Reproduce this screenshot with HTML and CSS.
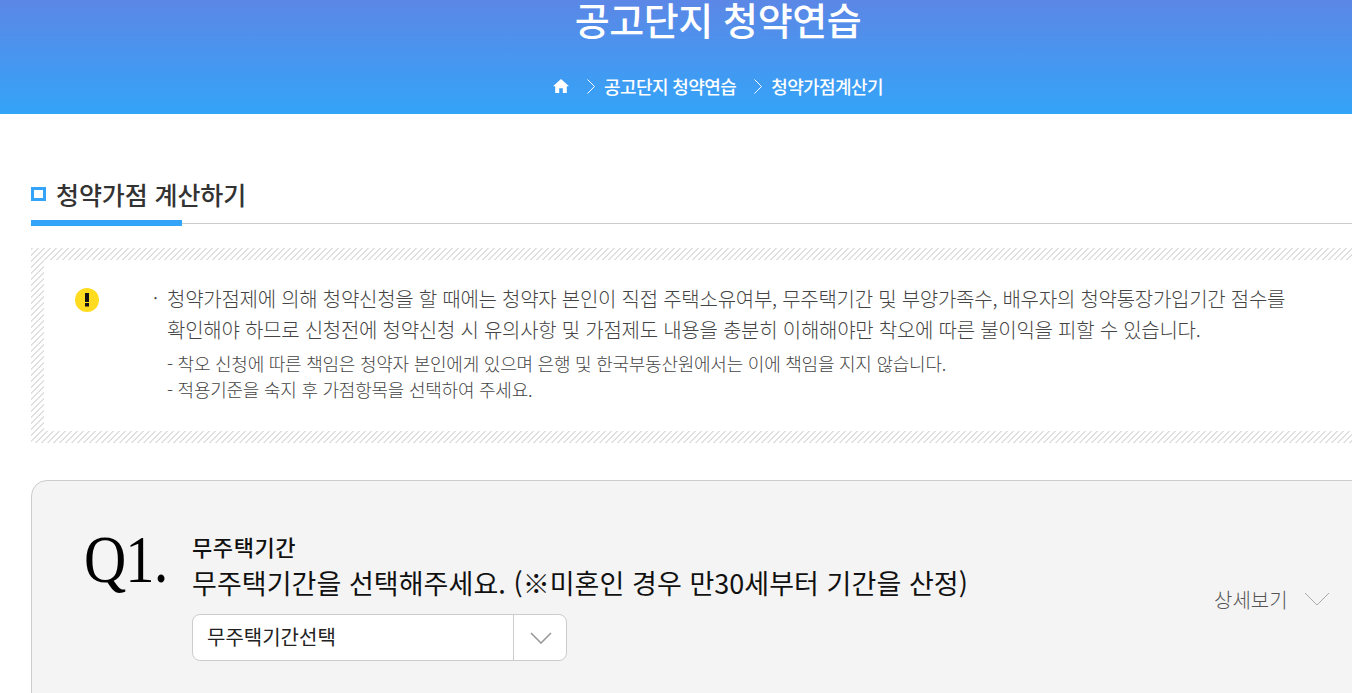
FILE: index.html
```html
<!DOCTYPE html>
<html lang="ko">
<head>
<meta charset="utf-8">
<title>청약가점계산기</title>
<link rel="stylesheet" href="styles.css">
</head>
<body>
<div class="page">
  <header class="hero">
    <h1 class="hero-title">공고단지 청약연습</h1>
    <nav class="crumbs">
      <svg class="home" viewBox="0 0 16 14" width="16" height="14"><path d="M8 0 L16 7.2 H13.8 V14 H9.8 V9.2 H6.2 V14 H2.2 V7.2 H0 Z" fill="#fff"/></svg>
      <svg class="chev" viewBox="0 0 8 15" width="8" height="15"><path d="M.5 .5 L7.5 7.5 L.5 14.5" fill="none" stroke="#fff" stroke-width="1"/></svg>
      <span class="crumb">공고단지 청약연습</span>
      <svg class="chev" viewBox="0 0 8 15" width="8" height="15"><path d="M.5 .5 L7.5 7.5 L.5 14.5" fill="none" stroke="#fff" stroke-width="1"/></svg>
      <span class="crumb">청약가점계산기</span>
    </nav>
  </header>
  <main class="main">
    <div class="sec-head">
      <span class="sec-mark"></span>
      <h2 class="sec-title">청약가점 계산하기</h2>
    </div>
    <section class="notice">
      <div class="notice-inner">
        <svg class="warn" viewBox="0 0 24 24" width="24" height="24"><circle cx="12" cy="12" r="12" fill="#ffdc1f"/><rect x="10" y="5" width="4" height="9" fill="#111"/><rect x="10" y="15" width="4" height="3.5" fill="#111"/></svg>
        <div class="notice-body">
          <p class="lead">청약가점제에 의해 청약신청을 할 때에는 청약자 본인이 직접 주택소유여부, 무주택기간 및 부양가족수, 배우자의 청약통장가입기간 점수를<br>확인해야 하므로 신청전에 청약신청 시 유의사항 및 가점제도 내용을 충분히 이해해야만 착오에 따른 불이익을 피할 수 있습니다.</p>
          <p class="sub">- 착오 신청에 따른 책임은 청약자 본인에게 있으며 은행 및 한국부동산원에서는 이에 책임을 지지 않습니다.</p>
          <p class="sub">- 적용기준을 숙지 후 가점항목을 선택하여 주세요.</p>
        </div>
      </div>
    </section>
    <section class="card">
      <div class="q-num">Q1.</div>
      <div class="q-body">
        <div class="q-label">무주택기간</div>
        <div class="q-text">무주택기간을 선택해주세요. (※미혼인 경우 만30세부터 기간을 산정)</div>
        <div class="select">
          <span class="select-val">무주택기간선택</span>
          <span class="select-btn"><svg viewBox="0 0 22 12" width="22" height="12"><path d="M1 1 L11 11 L21 1" fill="none" stroke="#999" stroke-width="1.6"/></svg></span>
        </div>
      </div>
      <div class="more">
        <span>상세보기</span>
        <svg viewBox="0 0 26 14" width="26" height="14"><path d="M1 1 L13 13 L25 1" fill="none" stroke="#aaa" stroke-width="1"/></svg>
      </div>
    </section>
  </main>
</div>
</body>
</html>
```
FILE: styles.css
```css
* { box-sizing: border-box; }
html, body { margin: 0; padding: 0; height: 693px; overflow: hidden; background: #fff; }
body { font-family: "Noto Sans CJK KR", "Noto Sans", sans-serif; color: #333; }
.page { width: 1436px; }
.hero { height: 114px; background: linear-gradient(180deg, #5c87e6 0%, #33a4f8 100%); color: #fff; text-align: center; overflow: hidden; }
.hero-title { margin: 0; height: 72px; font-size: 38px; font-weight: 500; line-height: 38px; letter-spacing: -0.4px; }
.crumbs { display: flex; justify-content: center; align-items: center; height: 28px; }
.home { margin-right: 18px; }
.chev { margin-right: 9px; }
.crumb { font-size: 18px; font-weight: 500; margin-right: 18px; letter-spacing: -0.6px; }
.crumb:last-child { margin-right: 0; }
.main { padding-left: 31px; }
.sec-head { position: relative; display: flex; align-items: center; height: 46px; margin-top: 64px; margin-bottom: 24px; padding-bottom: 13px; border-bottom: 1px solid #ccc; }
.sec-head::after { content: ""; position: absolute; left: 0; bottom: -3px; width: 151px; height: 6px; background: #33a4f8; }
.sec-mark { width: 15px; height: 14px; border: 3px solid #33a4f8; margin-right: 10px; }
.sec-title { margin: 0; font-size: 25px; font-weight: 500; color: #333; letter-spacing: -0.1px; }
.notice { padding: 12px 0 12px 13px; background: repeating-linear-gradient(135deg, #e0e0e0 0, #e0e0e0 2px, #fff 2px, #fff 4.243px); }
.notice-inner { display: flex; align-items: flex-start; background: #fff; height: 171px; padding: 23px 0 0 31px; }
.warn { flex: none; margin-top: 5px; }
.notice-body { margin-left: 68px; width: 1160px; }
.lead { position: relative; margin: 0 0 5px; font-size: 20px; font-weight: 300; line-height: 31px; color: #444; letter-spacing: -0.26px; }
.lead::before { content: "·"; position: absolute; left: -14px; top: -1px; }
.sub { margin: 0; font-size: 18px; font-weight: 300; line-height: 26px; color: #444; letter-spacing: -0.24px; }
.card { display: flex; height: 300px; margin-top: 37px; padding: 41px 0 0 52px; background: #f4f4f4; border: 1px solid #ccc; border-radius: 16px; }
.q-num { width: 108px; font-family: "Liberation Serif", serif; font-size: 68px; line-height: 74px; letter-spacing: -1px; color: #000; transform: scaleX(0.86); transform-origin: left center; }
.q-body { width: 1022px; }
.q-label { margin-top: 10px; font-size: 22px; font-weight: 500; line-height: 28px; color: #111; letter-spacing: 0.6px; }
.q-text { margin-top: 6px; font-size: 27px; font-weight: 400; line-height: 34px; color: #111; letter-spacing: 0.05px; }
.select { display: flex; width: 375px; height: 47px; margin-top: 14px; background: #fff; border: 1px solid #ccc; border-radius: 8px; }
.select-val { flex: 1; padding-left: 14px; font-size: 20px; line-height: 44px; color: #222; }
.select-btn { display: flex; align-items: center; justify-content: center; width: 53px; padding-left: 2px; border-left: 1px solid #ccc; }
.more { display: flex; align-items: center; gap: 16px; height: 36px; margin-top: 59px; font-size: 20px; font-weight: 300; color: #555; white-space: nowrap; }
```
